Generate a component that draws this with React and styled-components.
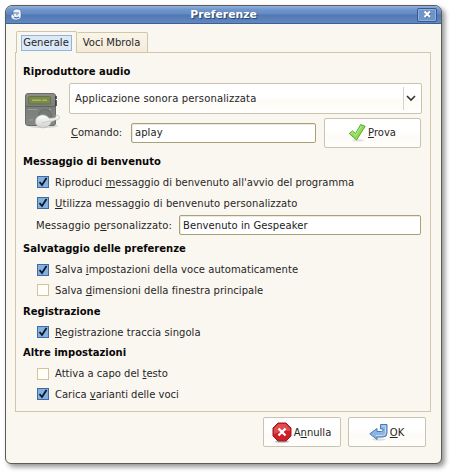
import React from "react";
import styled, { createGlobalStyle } from "styled-components";

const Global = createGlobalStyle`
  * { box-sizing: border-box; }
  html, body { margin: 0; background: #fff; overflow: hidden; }
  body { font-family: "DejaVu Sans", sans-serif; font-size: 10px; color: #262626; }
`;

const Desktop = styled.div`
  width: 450px;
  height: 472px;
  padding: 5px 0 0 5px;
`;

const Dialog = styled.main`
  width: 437px;
  height: 459px;
  border: 1px solid #5c5b55;
  border-radius: 7px 7px 6px 6px;
  background: #faf7f0;
  box-shadow: 3px 3px 5px rgba(0, 0, 0, 0.42);
  overflow: hidden;
`;

const TitleBar = styled.header`
  height: 19px;
  margin: -1px -1px 0;
  padding: 0 4px 0 4px;
  display: grid;
  grid-template-columns: 20px 1fr 20px;
  align-items: center;
  border: 1px solid #3f5f91;
  border-radius: 7px 7px 0 0;
  background: linear-gradient(#91b1dd 0, #7197cd 20%, #6289c1 48%, #5078b3 52%, #6288c0 100%);
`;

const Title = styled.h1`
  margin: 0;
  text-align: center;
  color: #fff;
  font-size: 10.8px;
  line-height: 17px;
  text-shadow: 1px 1px 1px #263f68;
`;

const CloseButton = styled.button`
  width: 20px;
  height: 14px;
  padding: 0;
  display: grid;
  place-items: center;
  border: 1px solid #36598f;
  border-radius: 2px;
  background: #6e94c9;
  box-shadow: inset 0 0 0 1px #91afd8;
`;

const Tabs = styled.nav`
  height: 28px;
  padding: 6px 0 0 10px;
  display: flex;
  align-items: flex-end;
`;

const Tab = styled.button`
  position: relative;
  z-index: ${(p) => (p.$active ? 1 : 0)};
  width: ${(p) => (p.$active ? 61 : 71)}px;
  height: ${(p) => (p.$active ? 22 : 20)}px;
  margin-bottom: ${(p) => (p.$active ? -1 : 0)}px;
  padding: ${(p) => (p.$active ? "0 1px 0 0" : "0 1px 0 0")};
  display: grid;
  place-items: center;
  border: 1px solid #d0c6a8;
  border-left-width: ${(p) => (p.$active ? 1 : 0)}px;
  border-bottom: 0;
  border-radius: 2px 2px 0 0;
  background: ${(p) => (p.$active ? "#faf7f0" : "linear-gradient(#faf5e9, #f4ead9)")};
  color: #262626;
  font: inherit;
  white-space: nowrap;
`;

const Focus = styled.span`
  width: 51px;
  height: 16px;
  display: grid;
  place-items: center;
  border: 1px solid #91b4dd;
  background: #dce9f6;
`;

const Panel = styled.section`
  width: 416px;
  height: 360px;
  margin-left: 9px;
  padding: 8px 8px 0 7px;
  border: 1px solid #d0c6a8;
`;

const Heading = styled.h2`
  height: 21px;
  margin: 0;
  color: #080808;
  font-size: 10px;
  line-height: 21px;
  white-space: nowrap;
`;

const AudioSettings = styled.div`
  height: 69px;
  padding-top: 1px;
  display: grid;
  grid-template-columns: 46px 353px;
`;

const DeviceIcon = styled.svg`
  margin: 9px 0 0 1px;
`;

const Combo = styled.div`
  height: 31px;
  display: flex;
  align-items: center;
  padding: 0 3px 0 5px;
  border: 1px solid #c9c3b3;
  border-radius: 2px;
  background: linear-gradient(#fff 45%, #fcfbf6 55%, #fffefa);
`;

const ComboText = styled.span`
  flex: 1;
  letter-spacing: 0.15px;
`;

const ComboArrow = styled.span`
  width: 15px;
  height: 23px;
  display: grid;
  place-items: center;
  border-left: 1px solid #d8d4ca;
`;

const CommandRow = styled.div`
  height: 37px;
  display: grid;
  grid-template-columns: 62px 185px 106px;
  align-items: center;
`;

const CommandLabel = styled.label`
  padding-left: 2px;
`;

const Entry = styled.input`
  width: 100%;
  height: 20px;
  padding: 0 3px;
  border: 1px solid #aaa078;
  border-radius: 2px;
  outline: 0;
  background: #fff;
  box-shadow: inset 1px 1px 0 #eeeade;
  color: #222;
  font: inherit;
  letter-spacing: 0.07px;
`;

const Button = styled.button`
  width: 78px;
  height: 30px;
  padding: 0 1px 0 0;
  display: flex;
  align-items: center;
  justify-content: center;
  gap: 2px;
  border: 1px solid #c9c3b3;
  border-radius: 2px;
  background: linear-gradient(#fff 35%, #fcfbf7 65%, #fffefb);
  color: #262626;
  font: inherit;
`;

const TestButton = styled(Button)`
  width: 97px;
  margin-left: 8px;
`;

const Option = styled.div`
  height: 20.7px;
  padding-left: 14px;
  display: flex;
  align-items: center;
  gap: 6px;
  white-space: nowrap;
`;

const Box = styled.span`
  flex: none;
  width: 12px;
  height: 12px;
  display: grid;
  place-items: center;
  border: 1px solid ${(p) => (p.$checked ? "#416b9f" : "#d0c49e")};
  background: ${(p) => (p.$checked ? "#85b1e1" : "#fffef9")};
`;

const OptionText = styled.span`
  letter-spacing: ${(p) => p.$spacing || 0}px;
`;

const MessageRow = styled.div`
  height: 25px;
  padding: 2px 1px 3px 13px;
  display: grid;
  grid-template-columns: 143px 242px;
  align-items: center;
`;

const MessageLabel = styled.label`
  letter-spacing: 0.16px;
  white-space: nowrap;
`;

const Footer = styled.footer`
  height: 36px;
  padding: 5px 15px 0 0;
  display: flex;
  justify-content: flex-end;
  gap: 7px;
`;

const Key = styled.u`
  text-decoration-thickness: 1px;
  text-underline-offset: 1px;
`;

function CheckOption({ checked, spacing, children }) {
  return (
    <Option>
      <Box $checked={checked}>
        {checked && (
          <svg width="10" height="10" viewBox="0 0 10 10">
            <path d="M1.5 5 4 8 8.5 1" fill="none" stroke="#0b1725" strokeWidth="1.8" />
          </svg>
        )}
      </Box>
      <OptionText $spacing={spacing}>{children}</OptionText>
    </Option>
  );
}

function Player() {
  return (
    <DeviceIcon width="37" height="37" viewBox="0 0 37 37">
      <defs>
        <linearGradient id="metal" x2="0" y2="1">
          <stop stopColor="#8d908a" />
          <stop offset=".4" stopColor="#7a7e79" />
          <stop offset="1" stopColor="#858985" />
        </linearGradient>
        <linearGradient id="knob" x2="0" y2="1">
          <stop stopColor="#fff" />
          <stop offset="1" stopColor="#cfcfcd" />
        </linearGradient>
      </defs>
      <ellipse cx="19" cy="34" rx="15" ry="2" fill="#aaa" opacity=".4" />
      <rect x="1.5" y="1.5" width="30" height="32" rx="2.5" fill="url(#metal)" stroke="#686d69" />
      <path d="M32 4v3M32 8v6" stroke="#353936" strokeWidth="1.6" />
      <path d="M2 14.5h29" stroke="#60655f" />
      <rect x="4.5" y="4.5" width="22" height="7.5" rx="1" fill="#7c8a48" stroke="#666f50" />
      <path d="M8 8.2h9m1 0h5" stroke="#a9b65e" strokeWidth="1.5" />
      <path d="M4 17.5h9" stroke="#a7aaa5" strokeDasharray="2 .6" />
      <path d="M20 17.5h2m3 0h2M5 28h4" stroke="#a0a39e" />
      <circle cx="21" cy="24" r="6.5" fill="#777b77" stroke="#626763" strokeWidth=".8" />
      <path d="M14 24.5c4-3 9-1.5 11 1.8l4.5-.3c2 0 2.8-1.2 2.3-2.7 2-.6 4 1 3.5 2.8-.5 1.4-2 2-3.7 1.9L27 29.8c-.5 3-3.5 5.8-7.5 6-5 .1-8.5-3-8-6.5.1-2 1-3.7 2.5-4.8Z" fill="url(#knob)" stroke="#b6b7b3" strokeWidth=".7" />
      <path d="m18 31 9-2.3" stroke="#c3c3bf" strokeWidth=".8" />
    </DeviceIcon>
  );
}

export default function App() {
  return (
    <>
      <Global />
      <Desktop>
        <Dialog>
          <TitleBar>
            <svg width="12" height="13" viewBox="0 0 12 13">
              <path d="M3 4q0-3 4-3 4 0 4 3v5q-1 3-5 3-4 0-5-3V7l2-1Z" fill="#edf3fa" stroke="#3d619a" strokeWidth=".5" />
              <path d="M1 5h8M4 9.3q3 1.2 5-.3" fill="none" stroke="#5675a5" strokeWidth="1.2" />
              <path d="M3.5 6.5v1M7 6.3v1" stroke="#405f91" strokeWidth="1.2" />
            </svg>
            <Title>Preferenze</Title>
            <CloseButton aria-label="Chiudi">
              <svg width="9" height="9" viewBox="0 0 9 9">
                <path d="m2.3 2.3 5 5m0-5-5 5" stroke="#2b4877" strokeWidth="2" />
                <path d="m1.5 1.5 5.5 5.5m0-5.5-5.5 5.5" stroke="#fff" strokeWidth="2" />
              </svg>
            </CloseButton>
          </TitleBar>
          <Tabs>
            <Tab $active><Focus>Generale</Focus></Tab>
            <Tab>Voci Mbrola</Tab>
          </Tabs>
          <Panel>
            <Heading>Riproduttore audio</Heading>
            <AudioSettings>
              <Player />
              <div>
                <Combo>
                  <ComboText>Applicazione sonora personalizzata</ComboText>
                  <ComboArrow>
                    <svg width="10" height="7" viewBox="0 0 10 7">
                      <path d="m1 1 4 4 4-4" fill="none" stroke="#333" strokeWidth="1.6" />
                    </svg>
                  </ComboArrow>
                </Combo>
                <CommandRow>
                  <CommandLabel><Key>C</Key>omando:</CommandLabel>
                  <Entry defaultValue="aplay" />
                  <TestButton>
                    <svg width="18" height="19" viewBox="0 0 18 19">
                      <ellipse cx="10" cy="17.3" rx="6" ry="1.2" fill="#e2e2dc" />
                      <path d="m1.2 10.5 3.3-2.6 3 2.6 5.2-9 4.5 1.8L8.5 17Z" fill="#8fda57" stroke="#5caa34" strokeLinejoin="round" />
                      <path d="m3 10.5 1.5-1.2 3.2 3L13.3 3" fill="none" stroke="#b9ef90" />
                    </svg>
                    <span><Key>P</Key>rova</span>
                  </TestButton>
                </CommandRow>
              </div>
            </AudioSettings>
            <Heading>Messaggio di benvenuto</Heading>
            <CheckOption checked spacing={0.02}>Riproduci <Key>m</Key>essaggio di benvenuto all'avvio del programma</CheckOption>
            <CheckOption checked spacing={0.09}><Key>U</Key>tilizza messaggio di benvenuto personalizzato</CheckOption>
            <MessageRow>
              <MessageLabel>Messaggio p<Key>e</Key>rsonalizzato:</MessageLabel>
              <Entry defaultValue="Benvenuto in Gespeaker" />
            </MessageRow>
            <Heading>Salvataggio delle preferenze</Heading>
            <CheckOption checked spacing={0.06}>Salva <Key>i</Key>mpostazioni della voce automaticamente</CheckOption>
            <CheckOption spacing={0.05}>Salva <Key>d</Key>imensioni della finestra principale</CheckOption>
            <Heading>Registrazione</Heading>
            <CheckOption checked spacing={0.06}><Key>R</Key>egistrazione traccia singola</CheckOption>
            <Heading>Altre impostazioni</Heading>
            <CheckOption>Attiva a capo del <Key>t</Key>esto</CheckOption>
            <CheckOption checked>Carica <Key>v</Key>arianti delle voci</CheckOption>
          </Panel>
          <Footer>
            <Button>
              <svg width="20" height="21" viewBox="0 0 20 21">
                <ellipse cx="10" cy="19.5" rx="7" ry="1.3" fill="#bbb" />
                <path d="M6 1h8l5 5v8l-5 5H6l-5-5V6Z" fill="#cc202b" stroke="#9e1822" />
                <path d="M6.5 2h7L18 6.5V9Q10 8 2 12V6.5Z" fill="#ef6a6d" opacity=".6" />
                <path d="m6.5 6.5 7 7m0-7-7 7" stroke="#fff" strokeWidth="2.3" />
              </svg>
              <span>A<Key>n</Key>nulla</span>
            </Button>
            <Button>
              <svg width="19" height="19" viewBox="0 0 19 19">
                <ellipse cx="10" cy="16.5" rx="7" ry="1.2" fill="#ddd" />
                <path d="M11.5 1.5H18V10q0 4-4 4H8v2.5L.8 10.8 8 5.5V8.500h4.500q1.500 0 1.500-1.500V6h-2.500Z" fill="#8bb5e3" stroke="#487bb6" strokeLinejoin="round" />
                <path d="M12.500 3H16.500V9.500q0 3-3 3H7" fill="none" stroke="#c2daf4" />
              </svg>
              <span><Key>O</Key>K</span>
            </Button>
          </Footer>
        </Dialog>
      </Desktop>
    </>
  );
}
